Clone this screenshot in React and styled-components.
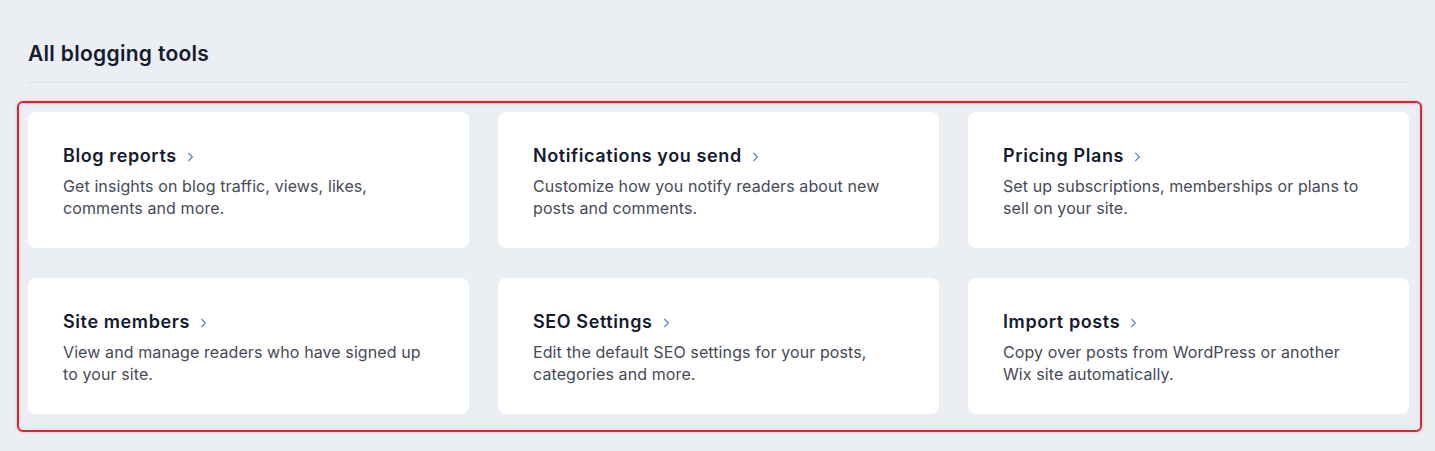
import styled, { createGlobalStyle } from "styled-components";

const tools = [
  { title: "Blog reports", text: "Get insights on blog traffic, views, likes, comments and more." },
  { title: "Notifications you send", text: "Customize how you notify readers about new posts and comments." },
  { title: "Pricing Plans", text: "Set up subscriptions, memberships or plans to sell on your site." },
  { title: "Site members", text: "View and manage readers who have signed up to your site." },
  { title: "SEO Settings", text: "Edit the default SEO settings for your posts, categories and more." },
  { title: "Import posts", text: "Copy over posts from WordPress or another Wix site automatically." },
];

const Chevron = () => (
  <svg width="7" height="12" viewBox="0 0 7 12" fill="none">
    <path d="M1.2 1.8L5.4 6L1.2 10.2" stroke="#4f86bd" strokeWidth="1.2" />
  </svg>
);

const App = () => {
  return (
    <>
      <GlobalStyle />
      <Page>
        <Heading>All blogging tools</Heading>
        <Divider />
        <Highlight>
          <Grid>
            {tools.map((tool, i) => (
              <Card key={i}>
                <Title>
                  {tool.title}
                  <Chevron />
                </Title>
                <Description>{tool.text}</Description>
              </Card>
            ))}
          </Grid>
        </Highlight>
      </Page>
    </>
  );
};

export default App;

const GlobalStyle = createGlobalStyle`
  body {
    margin: 0;
    background: #ebeef3;
    font-family: "Inter", "Noto Sans", sans-serif;
  }
`;

const Page = styled.div`
  width: 1435px;
  height: 451px;
  box-sizing: border-box;
  padding: 40px 13px 0 17px;
  background: #ebeef3;
`;

const Heading = styled.h2`
  margin: 0 0 0 11px;
  font-size: 21px;
  line-height: 28px;
  font-weight: 600;
  color: #151b2e;
  letter-spacing: 0.3px;
`;

const Divider = styled.div`
  height: 1px;
  margin: 14px 12px 18px 11px;
  background: #dcdfe5;
`;

const Highlight = styled.div`
  border: 2px solid #d8262f;
  border-radius: 6px;
  padding: 9px 11px 16px 9px;
  box-shadow: inset 0 0 4px rgba(0, 0, 0, 0.08), 0 0 3px rgba(216, 38, 47, 0.3);
`;

const Grid = styled.div`
  display: grid;
  grid-template-columns: repeat(3, 1fr);
  column-gap: 29px;
  row-gap: 30px;
`;

const Card = styled.div`
  height: 136px;
  box-sizing: border-box;
  padding: 3px 35px 0;
  background: #ffffff;
  border-radius: 8px;
  display: flex;
  flex-direction: column;
  justify-content: center;
`;

const Title = styled.div`
  display: flex;
  align-items: center;
  gap: 10px;
  font-size: 18px;
  line-height: 24px;
  font-weight: 600;
  color: #151b2e;
  letter-spacing: 0.6px;
  margin-bottom: 7px;

  svg {
    margin-top: 1px;
  }
`;

const Description = styled.p`
  margin: 0;
  font-size: 16px;
  line-height: 22px;
  color: #454a57;
  letter-spacing: 0.1px;
  max-width: 368px;
`;
